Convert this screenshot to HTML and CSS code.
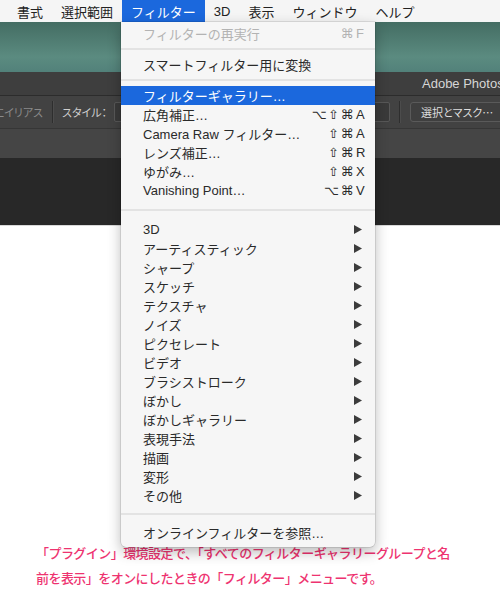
FILE: index.html
```html
<!DOCTYPE html>
<html lang="ja">
<head>
<meta charset="utf-8">
<title>Filter menu</title>
<link rel="stylesheet" href="styles.css">
</head>
<body>
<div class="menubar">
  <span class="mb-item">書式</span>
  <span class="mb-item">選択範囲</span>
  <span class="mb-item active">フィルター</span>
  <span class="mb-item">3D</span>
  <span class="mb-item">表示</span>
  <span class="mb-item">ウィンドウ</span>
  <span class="mb-item">ヘルプ</span>
</div>

<div class="app">
  <div class="teal"></div>
  <div class="titlebar"><span class="title">Adobe Photoshop CC 2018</span></div>
  <div class="options">
    <div class="opt-clip"><span class="opt-dim">アンチエイリアス</span></div>
    <div class="vdiv"></div>
    <span class="opt-label">スタイル：</span>
    <div class="opt-field"></div>
    <div class="vdiv"></div>
    <div class="opt-button">選択とマスク…</div>
  </div>
  <div class="band"></div>
  <div class="canvas"></div>
</div>

<p class="caption">「プラグイン」環境設定で、「すべてのフィルターギャラリーグループと名<br>前を表示」をオンにしたときの「フィルター」メニューです。</p>

<div class="menu">
  <div class="item disabled"><span class="label">フィルターの再実行</span><span class="sc"><span class="mods">⌘</span><span class="key">F</span></span></div>
  <div class="sep sep-a"></div>
  <div class="item"><span class="label">スマートフィルター用に変換</span></div>
  <div class="sep sep-b"></div>
  <div class="item selected"><span class="label">フィルターギャラリー…</span></div>
  <div class="item"><span class="label">広角補正…</span><span class="sc"><span class="mods">⌥⇧⌘</span><span class="key">A</span></span></div>
  <div class="item"><span class="label">Camera Raw フィルター…</span><span class="sc"><span class="mods">⇧⌘</span><span class="key">A</span></span></div>
  <div class="item"><span class="label">レンズ補正…</span><span class="sc"><span class="mods">⇧⌘</span><span class="key">R</span></span></div>
  <div class="item"><span class="label">ゆがみ…</span><span class="sc"><span class="mods">⇧⌘</span><span class="key">X</span></span></div>
  <div class="item"><span class="label">Vanishing Point…</span><span class="sc"><span class="mods">⌥⌘</span><span class="key">V</span></span></div>
  <div class="sep sep-c"></div>
  <div class="item sub"><span class="label">3D</span><svg class="arrow" viewBox="0 0 8 9"><polygon points="0,0 8,4.5 0,9"/></svg></div>
  <div class="item sub"><span class="label">アーティスティック</span><svg class="arrow" viewBox="0 0 8 9"><polygon points="0,0 8,4.5 0,9"/></svg></div>
  <div class="item sub"><span class="label">シャープ</span><svg class="arrow" viewBox="0 0 8 9"><polygon points="0,0 8,4.5 0,9"/></svg></div>
  <div class="item sub"><span class="label">スケッチ</span><svg class="arrow" viewBox="0 0 8 9"><polygon points="0,0 8,4.5 0,9"/></svg></div>
  <div class="item sub"><span class="label">テクスチャ</span><svg class="arrow" viewBox="0 0 8 9"><polygon points="0,0 8,4.5 0,9"/></svg></div>
  <div class="item sub"><span class="label">ノイズ</span><svg class="arrow" viewBox="0 0 8 9"><polygon points="0,0 8,4.5 0,9"/></svg></div>
  <div class="item sub"><span class="label">ピクセレート</span><svg class="arrow" viewBox="0 0 8 9"><polygon points="0,0 8,4.5 0,9"/></svg></div>
  <div class="item sub"><span class="label">ビデオ</span><svg class="arrow" viewBox="0 0 8 9"><polygon points="0,0 8,4.5 0,9"/></svg></div>
  <div class="item sub"><span class="label">ブラシストローク</span><svg class="arrow" viewBox="0 0 8 9"><polygon points="0,0 8,4.5 0,9"/></svg></div>
  <div class="item sub"><span class="label">ぼかし</span><svg class="arrow" viewBox="0 0 8 9"><polygon points="0,0 8,4.5 0,9"/></svg></div>
  <div class="item sub"><span class="label">ぼかしギャラリー</span><svg class="arrow" viewBox="0 0 8 9"><polygon points="0,0 8,4.5 0,9"/></svg></div>
  <div class="item sub"><span class="label">表現手法</span><svg class="arrow" viewBox="0 0 8 9"><polygon points="0,0 8,4.5 0,9"/></svg></div>
  <div class="item sub"><span class="label">描画</span><svg class="arrow" viewBox="0 0 8 9"><polygon points="0,0 8,4.5 0,9"/></svg></div>
  <div class="item sub"><span class="label">変形</span><svg class="arrow" viewBox="0 0 8 9"><polygon points="0,0 8,4.5 0,9"/></svg></div>
  <div class="item sub"><span class="label">その他</span><svg class="arrow" viewBox="0 0 8 9"><polygon points="0,0 8,4.5 0,9"/></svg></div>
  <div class="sep sep-d"></div>
  <div class="item"><span class="label">オンラインフィルターを参照…</span></div>
</div>
</body>
</html>
```

FILE: styles.css
```css
html, body {
  margin: 0;
  padding: 0;
  background: #ffffff;
}
body {
  width: 500px;
  height: 600px;
  overflow: hidden;
  position: relative;
  font-family: "Liberation Sans", "Noto Sans CJK JP", sans-serif;
}

/* ---- top menu bar ---- */
.menubar {
  height: 22px;
  background: #f5f5f5;
  display: flex;
  align-items: stretch;
  padding-left: 8px;
  font-size: 13px;
  color: #222222;
}
.mb-item {
  display: flex;
  align-items: center;
  padding: 0 9px;
}
.mb-item.active {
  background: #1b68dd;
  color: #ffffff;
}

/* ---- photoshop window ---- */
.app {
  display: flex;
  flex-direction: column;
}
.teal {
  height: 50px;
  background: linear-gradient(#446d63, #5b8b80 70%, #52817a);
}
.titlebar {
  height: 23px;
  background: #3e3e3e;
  border-bottom: 1px solid #2c2c2c;
  display: flex;
  align-items: center;
  padding-left: 422px;
  overflow: hidden;
  white-space: nowrap;
}
.title {
  font-size: 13px;
  color: #d6d6d6;
  font-family: "Liberation Sans", sans-serif;
}
.options {
  height: 32px;
  background: #424242;
  border-bottom: 1px solid #363636;
  display: flex;
  align-items: center;
  overflow: hidden;
  white-space: nowrap;
  font-family: "Noto Sans CJK JP", sans-serif;
  font-size: 11px;
  font-feature-settings: "palt";
}
.opt-clip {
  width: 43px;
  display: flex;
  justify-content: flex-end;
  overflow: hidden;
  flex: none;
}
.opt-dim {
  color: #8a8a8a;
  flex: none;
}
.vdiv {
  width: 1px;
  height: 22px;
  background: #2e2e2e;
  box-shadow: 1px 0 0 #4c4c4c;
  margin: 0 9px;
  flex: none;
}
.opt-label {
  color: #cfcfcf;
  width: 52px;
  flex: none;
}
.opt-field {
  flex: none;
  width: 274px;
  height: 18px;
  border: 1px solid #585858;
  border-radius: 2px;
  background: #3a3a3a;
}
.opt-button {
  flex: none;
  height: 18px;
  padding: 0 10px;
  width: 120px;
  margin-left: 1px;
  border: 1px solid #5a5a5a;
  border-radius: 3px;
  background: #3f3f3f;
  color: #dedede;
  display: flex;
  align-items: center;
}
.band {
  height: 29px;
  background: #454545;
}
.canvas {
  height: 67px;
  background: #282828;
  border-bottom: 1px solid #d9d9d9;
}

/* ---- caption ---- */
.caption {
  margin: 314px 0 0 36px;
  font-family: "Noto Sans CJK JP", sans-serif;
  font-size: 13px;
  letter-spacing: -0.55px;
  line-height: 25px;
  font-weight: 500;
  color: #ee3370;
  text-shadow: 0 0 2px #ffffff, 0 0 3px #ffffff;
}

/* ---- dropdown menu ---- */
.menu {
  position: absolute;
  left: 121px;
  top: 22px;
  width: 254px;
  box-sizing: border-box;
  padding: 2px 0 5px;
  background: #f6f6f6;
  border-radius: 0 0 5px 5px;
  box-shadow: 0 0 0 0.5px rgba(0, 0, 0, 0.18), 0 5px 14px rgba(0, 0, 0, 0.28);
  font-size: 13px;
  color: #2a2a2a;
}
.item {
  height: 19px;
  display: flex;
  align-items: center;
  padding: 0 7px 0 22px;
  white-space: nowrap;
}
.item .label {
  flex: 1;
}
.item.disabled {
  color: #b3b3b3;
}
.item.selected {
  background: #1b68dd;
  color: #ffffff;
}
.sc {
  display: flex;
  align-items: center;
  font-family: "DejaVu Sans", "Liberation Sans", sans-serif;
  font-size: 12px;
}
.mods {
  letter-spacing: 1.5px;
  font-size: 13px;
}
.key {
  width: 12px;
  margin-left: 1px;
  font-family: "Liberation Sans", sans-serif;
  font-size: 13px;
}
.arrow {
  width: 8px;
  height: 9px;
  margin-right: 6px;
  fill: #3c3c3c;
}
.sep {
  display: flex;
  flex-direction: column;
  justify-content: center;
}
.sep::after {
  content: "";
  height: 2px;
  background: #e3e3e3;
}
.sep-a { height: 12px; }
.sep-b { height: 12px; }
.sep-c { height: 20px; }
.sep-d { height: 18px; }
```
